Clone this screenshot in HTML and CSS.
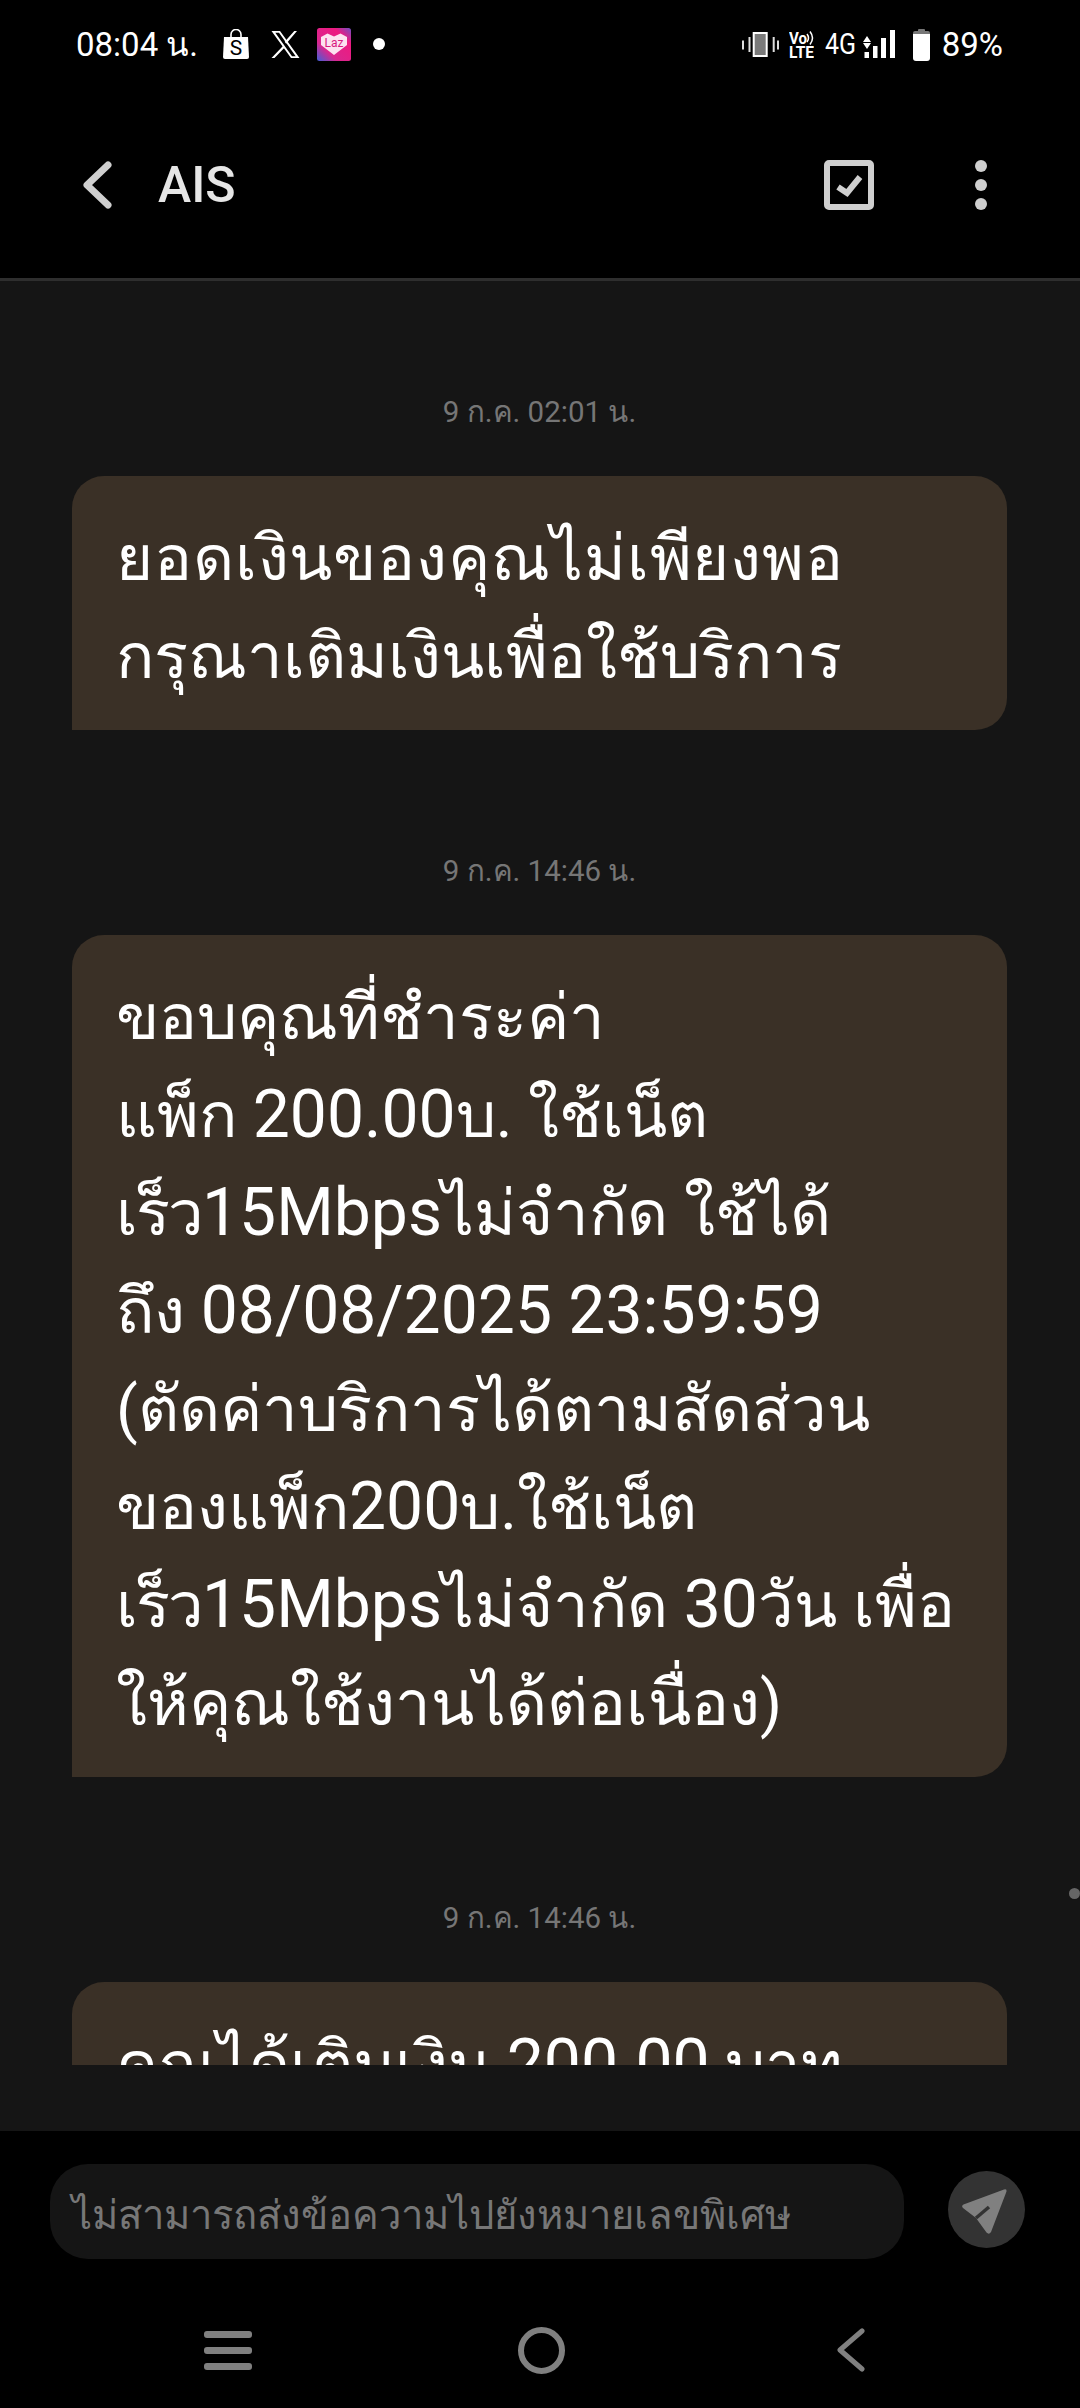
FILE: index.html
```html
<!DOCTYPE html>
<html>
<head>
<meta charset="utf-8">
<link rel="stylesheet" href="styles.css">
<title>AIS</title>
</head>
<body>
<div class="screen">
  <div class="statusbar">
    <div class="st-left">
      <span class="st-time">08:04 น.</span>
      <svg class="ic-shop" width="26" height="30" viewBox="0 0 26 30"><path d="M1 8h24l1 20q0 2-2 2H2q-2 0-2-2z" fill="#fff"/><path d="M8 9V5.500a5 5 0 0 1 10 0V9" fill="none" stroke="#fff" stroke-width="1.600"/><text x="13" y="26" class="shop-txt">S</text></svg>
      <svg class="ic-x" width="29" height="27" viewBox="0 0 28 27"><path d="M0 0h8.500L28 27h-8.500zM3.800 1.800 20.500 25.200h3.700L7.500 1.800z" fill="#fff" fill-rule="evenodd"/><path d="M25.500 0h-2.700L13.200 10.700l1.500 2zM11.700 14.700 0 27h3l10.200-10.500z" fill="#fff"/></svg>
      <svg class="ic-laz" width="34" height="33" viewBox="0 0 34 33"><defs><linearGradient id="lazg" x1="0" y1="1" x2="1" y2="0"><stop offset="0" stop-color="#3f5fd8"/><stop offset=".3" stop-color="#d9278f"/><stop offset=".75" stop-color="#ee1a80"/><stop offset="1" stop-color="#6f50c4"/></linearGradient></defs><rect width="34" height="33" rx="2.500" fill="url(#lazg)"/><path d="M4 9l6.500-3.500 6.500 3 6.500-3L30 9v8L17 27 4 17z" fill="#fde3f0"/><text x="17" y="19" class="laz-txt">Laz</text></svg>
      <span class="st-dot"></span>
    </div>
    <div class="st-right">
      <svg class="ic-vib" width="37" height="25" viewBox="0 0 37 25"><rect x="11.700" y="1" width="13" height="23" fill="#7a7a7a" stroke="#fff" stroke-width="2"/><path d="M1 8.500v9M7.500 5v15M31.700 5v15M36 8.500v9" stroke="#ddd" stroke-width="2"/></svg>
      <svg class="ic-volte" width="25" height="28" viewBox="0 0 25 28"><text x="0" y="14" class="vo-txt" textLength="18" lengthAdjust="spacingAndGlyphs">Vo</text><path d="M18 4q3 4 0 8M21 1.500q5 6.500 0 13" fill="none" stroke="#fff" stroke-width="1.500"/><text x="0" y="28" class="lte-txt" textLength="25" lengthAdjust="spacingAndGlyphs">LTE</text></svg>
      <span class="st-4g">4G</span>
      <svg class="ic-signal" width="32" height="28" viewBox="0 0 32 28"><path d="M0 12 4 6l4 6zM0 13h8l-4 6z" fill="#fff"/><rect x="1.500" y="22" width="4.500" height="6" fill="#fff"/><rect x="10" y="16" width="4.500" height="12" fill="#fff"/><rect x="18" y="8" width="5" height="20" fill="#fff"/><rect x="27" y="0" width="5" height="28" fill="#fff"/></svg>
      <svg class="ic-batt" width="17" height="33" viewBox="0 0 17 33"><path d="M5 3V2q0-1 1-1h5q1 0 1 1v1h3q2 0 2 2v3H0V5q0-2 2-2z" fill="#777"/><path d="M0 6h17v24q0 3-3 3H3q-3 0-3-3z" fill="#fff"/></svg>
      <span class="st-pct">89%</span>
    </div>
  </div>

  <div class="appbar">
    <svg class="ic-back" width="30" height="48" viewBox="0 0 30 48"><path d="M25 4 4 24l21 20" fill="none" stroke="#cfcfcf" stroke-width="7" stroke-linecap="round" stroke-linejoin="round"/></svg>
    <span class="app-title">AIS</span>
    <svg class="ic-check" width="50" height="50" viewBox="0 0 50 50"><rect x="3" y="3" width="44" height="44" rx="2" fill="none" stroke="#cfcfcf" stroke-width="6"/><path d="M14 27l9 6 13-16" fill="none" stroke="#cfcfcf" stroke-width="6"/></svg>
    <span class="ic-more"><i></i><i></i><i></i></span>
  </div>

  <div class="thread-wrap">
    <div class="thread">
      <div class="stamp">9 ก.ค. 02:01 น.</div>
      <div class="bubble"><span class="stretch">ยอดเงินของคุณไม่เพียงพอ</span><br>กรุณาเติมเงินเพื่อใช้บริการ</div>
      <div class="stamp">9 ก.ค. 14:46 น.</div>
      <div class="bubble">ขอบคุณที่ชำระค่า<br>แพ็ก <span class="lat">200.00</span>บ. ใช้เน็ต<br><span class="tight">เร็ว</span><span class="lat">15Mbps</span>ไม่จำกัด ใช้ได้<br>ถึง <span class="lat">08/08/2025 23:59:59</span><br>(ตัดค่าบริการได้ตามสัดส่วน<br>ของแพ็ก<span class="lat">200</span>บ.ใช้เน็ต<br><span class="tight">เร็ว</span><span class="lat">15Mbps</span>ไม่จำกัด <span class="lat">30</span>วัน เพื่อ<br>ให้คุณใช้งานได้ต่อเนื่อง)</div>
      <div class="stamp">9 ก.ค. 14:46 น.</div>
      <div class="bubble">คุณได้เติมเงิน <span class="lat">200.00</span> บาท</div>
    </div>
  </div>
  <span class="scroll-dot"></span>

  <div class="composer">
    <div class="input">ไม่สามารถส่งข้อความไปยังหมายเลขพิเศษ</div>
    <span class="send"><svg width="77" height="77" viewBox="0 0 77 77"><path d="M56 18.500q3-1 2.500 2L43 61q-2 3-4.500 .5L28 47 15 37q-2-2 .5-3.500z" fill="#808080"/><path d="M28 47 41 36" stroke="#333" stroke-width="3.500"/></svg></span>
  </div>

  <div class="navbar">
    <span class="nav-menu"><i></i><i></i><i></i></span>
    <span class="nav-home"></span>
    <svg width="29" height="44" viewBox="0 0 29 44"><path d="M26 3 4 22l22 19" fill="none" stroke="#808080" stroke-width="5" stroke-linecap="round" stroke-linejoin="round"/></svg>
  </div>
</div>
</body>
</html>
```

FILE: styles.css
```css
*{margin:0;padding:0;box-sizing:border-box;}
html,body{width:1080px;height:2408px;overflow:hidden;background:#000;}
body{font-family:Roboto,"Noto Sans",sans-serif;color:#fff;}
.screen{width:1080px;height:2408px;display:flex;flex-direction:column;position:relative;}

/* status bar */
.statusbar{height:88px;padding:0 77px 0 76px;display:flex;justify-content:space-between;align-items:center;}
.st-left,.st-right{display:flex;align-items:center;}
.st-time{font-size:33px;width:147px;white-space:nowrap;}
.ic-shop{margin-right:22px;}
.ic-x{margin-right:17px;}
.ic-laz{margin-right:22px;}
.shop-txt{font-size:21px;fill:#000;text-anchor:middle;font-family:Roboto,sans-serif;}
.laz-txt{font-size:12px;fill:#d81b80;text-anchor:middle;font-family:Roboto,sans-serif;}
.st-dot{width:12px;height:12px;border-radius:50%;background:#fff;}
.ic-vib{margin-right:10px;}
.ic-volte{margin-right:11px;}
.vo-txt{font-size:16px;font-weight:700;fill:#fff;font-family:Roboto,sans-serif;}
.lte-txt{font-size:16px;font-weight:700;fill:#fff;font-family:Roboto,sans-serif;}
.st-4g{font-size:29px;width:30px;margin-right:8px;white-space:nowrap;transform:scaleX(.86);transform-origin:left center;}
.ic-signal{margin-right:18px;}
.ic-batt{margin-right:12px;}
.st-pct{font-size:33px;}

/* header */
.appbar{height:193px;padding:4px 0 0 83px;display:flex;align-items:center;border-bottom:3px solid #2e2e2e;}
.ic-back{margin-right:45px;}
.app-title{font-size:50px;font-weight:500;color:#e6e6e6;flex:1;}
.ic-check{margin-right:101px;}
.ic-more{display:flex;flex-direction:column;gap:7px;margin-right:93px;}
.ic-more i{width:12px;height:12px;border-radius:50%;background:#cfcfcf;}

/* messages */
.thread-wrap{flex:none;background:#151515;padding-bottom:66px;}
.thread{height:1784px;overflow:hidden;padding:0 73px 0 72px;}
.stamp{font-size:29.5px;color:#767676;text-align:center;height:35px;line-height:35px;margin:124px 0 46px;}
.stamp:first-child{margin-top:114px;}
.bubble{background:#3a3026;border-radius:32px 32px 32px 0;padding:34px 44px 24px;font-size:63.5px;line-height:98px;white-space:nowrap;}
.lat{font-size:66px;line-height:0;}
.stretch{letter-spacing:.9px;}
.tight{letter-spacing:-2px;}
.scroll-dot{position:absolute;left:1069px;top:1888px;width:11px;height:11px;border-radius:50%;background:#666;}

/* bottom */
.composer{flex:none;height:166px;padding:33px 0 0 50px;display:flex;align-items:flex-start;}
.input{width:854px;height:95px;line-height:95px;padding:4px 0 0 22px;background:#151515;border-radius:38px;font-size:40px;color:#777;white-space:nowrap;}
.send{width:77px;height:77px;margin:7px 0 0 44px;border-radius:50%;background:#333;}
.send svg{display:block;}
.navbar{flex:none;height:106px;padding-left:204px;display:flex;align-items:center;}
.nav-menu{display:flex;flex-direction:column;gap:9px;width:48px;margin-right:266px;}
.nav-menu i{height:7px;border-radius:3px;background:#808080;}
.nav-home{width:47px;height:47px;border:6px solid #808080;border-radius:50%;margin-right:271px;}
```
